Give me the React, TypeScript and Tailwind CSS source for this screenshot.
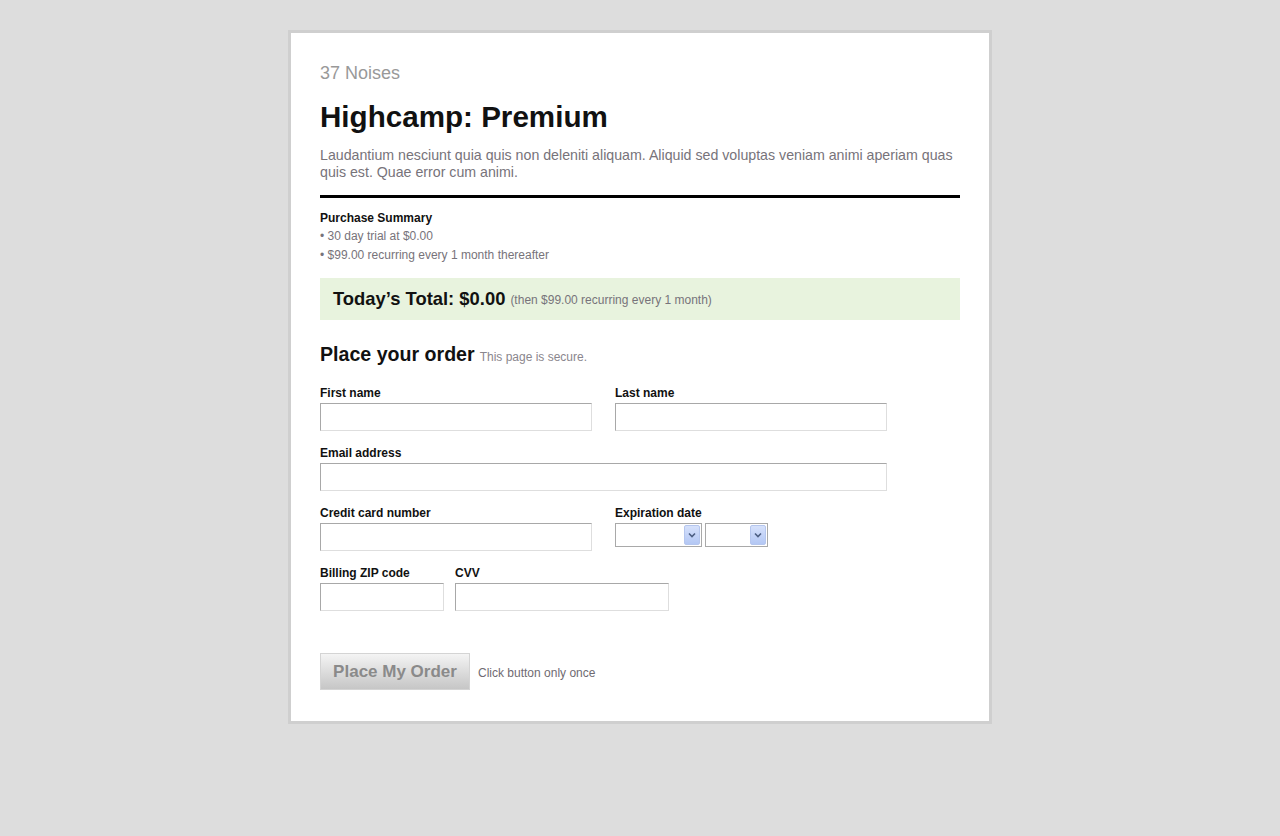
import React from "react";

function TextInput({ w }: { w: string }) {
  return (
    <input
      type="text"
      className={`block ${w} h-[28px] border border-t-[#a8a8a8] border-l-[#a8a8a8] border-b-[#dedede] border-r-[#dedede] bg-white px-1 text-[13px] outline-none`}
    />
  );
}

function Select({ w }: { w: string }) {
  return (
    <div className={`relative ${w} h-[24px] border border-[#a9a9a9] bg-white`}>
      <div className="absolute right-[1px] top-[1px] bottom-[1px] w-[16px] rounded-[2px] border border-[#b5c6ee] bg-gradient-to-b from-[#d6e1fb] to-[#b3c7f4] flex items-center justify-center">
        <svg width="8" height="6" viewBox="0 0 8 6">
          <path d="M1 1.5 L4 4.5 L7 1.5" stroke="#4d5f83" strokeWidth="1.6" fill="none" />
        </svg>
      </div>
    </div>
  );
}

function Label({ children }: { children: React.ReactNode }) {
  return <div className="text-[12px] leading-[15px] font-bold text-[#111] mb-[2px]">{children}</div>;
}

export default function App() {
  return (
    <div
      className="min-h-[836px] w-full bg-[#dddddd] pt-[30px]"
      style={{ fontFamily: '"Liberation Sans", Arial, sans-serif' }}
    >
      <div className="mx-auto w-[704px] border-[3px] border-[#cfcfcf] bg-white px-[29px] pt-[30px] pb-[31px]">
        <div className="text-[18px] leading-[21px] text-[#999]">37 Noises</div>
        <h1 className="mt-[15px] text-[29.6px] leading-[35px] font-bold text-[#111]">Highcamp: Premium</h1>
        <p className="mt-[13px] text-[14.2px] leading-[17px] text-[#77737a]">
          Laudantium nesciunt quia quis non deleniti aliquam. Aliquid sed voluptas veniam animi aperiam quas quis est. Quae error cum animi.
        </p>
        <div className="mt-[13.5px] h-[3px] bg-black" />
        <div className="mt-[12.5px] text-[12px] leading-[16px] font-bold text-[#111]">Purchase Summary</div>
        <div className="mt-[1px] text-[12px] leading-[19px] text-[#77737a]">• 30 day trial at $0.00</div>
        <div className="text-[12px] leading-[19px] text-[#77737a]">• $99.00 recurring every 1 month thereafter</div>
        <div className="mt-[13px] h-[42px] bg-[#e8f3de] pl-[13px] flex items-center">
          <span className="text-[18.4px] font-bold text-[#111]">Today’s Total: $0.00</span>
          <span className="ml-[5px] text-[12px] text-[#77737a] relative top-[1px]">(then $99.00 recurring every 1 month)</span>
        </div>
        <div className="mt-[22px] flex items-baseline leading-[24px]">
          <span className="text-[19.6px] font-bold text-[#111]">Place your order</span>
          <span className="ml-[5px] text-[12px] text-[#8a868d]">This page is secure.</span>
        </div>
        <div className="mt-[17px] flex gap-[23px]">
          <div>
            <Label>First name</Label>
            <TextInput w="w-[272px]" />
          </div>
          <div>
            <Label>Last name</Label>
            <TextInput w="w-[272px]" />
          </div>
        </div>
        <div className="mt-[15px]">
          <Label>Email address</Label>
          <TextInput w="w-[567px]" />
        </div>
        <div className="mt-[15px] flex gap-[23px]">
          <div>
            <Label>Credit card number</Label>
            <TextInput w="w-[272px]" />
          </div>
          <div>
            <Label>Expiration date</Label>
            <div className="flex gap-[3px]">
              <Select w="w-[87px]" />
              <Select w="w-[63px]" />
            </div>
          </div>
        </div>
        <div className="mt-[15px] flex gap-[11px]">
          <div>
            <Label>Billing ZIP code</Label>
            <TextInput w="w-[124px]" />
          </div>
          <div>
            <Label>CVV</Label>
            <TextInput w="w-[214px]" />
          </div>
        </div>
        <div className="mt-[42px] flex items-center">
          <button className="w-[150px] h-[37px] border border-[#d4d4d4] bg-gradient-to-b from-[#f4f4f4] to-[#c6c6c6] text-[17px] font-bold text-[#8a8a8a]">
            Place My Order
          </button>
          <span className="ml-[8px] text-[12px] text-[#6f6b72] relative top-[1px]">Click button only once</span>
        </div>
      </div>
    </div>
  );
}
